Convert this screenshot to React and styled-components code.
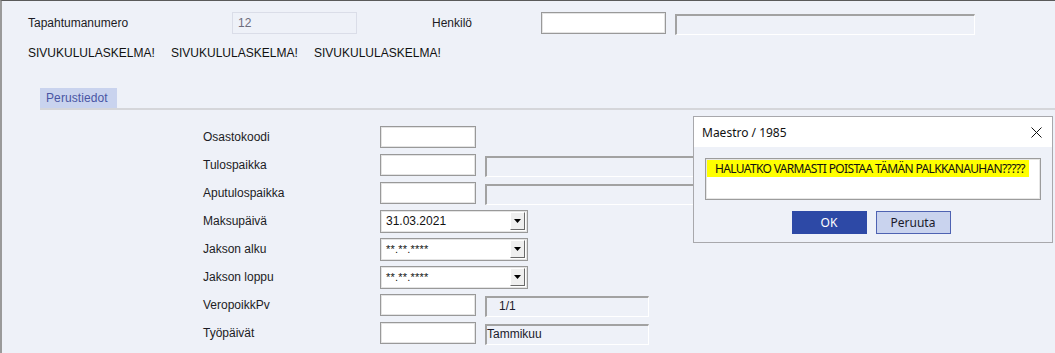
import React from 'react';
import styled, { createGlobalStyle } from 'styled-components';

const GlobalStyle = createGlobalStyle`
  html, body {
    margin: 0;
    padding: 0;
    background: #eef1f8;
  }
  body {
    font-family: "Liberation Sans", Arial, sans-serif;
    font-size: 12px;
    color: #1c1c24;
  }
`;

const Frame = styled.div`
  position: relative;
  width: 1053px;
  height: 352px;
  overflow: hidden;
  background: #eef1f8;
  border-top: 1px solid #5a5a5a;
  border-left: 2px solid #9a9a9a;
  display: flex;
  flex-direction: column;
`;

const TopRow = styled.div`
  display: flex;
  align-items: center;
  height: 22px;
  margin-top: 11px;
  padding-left: 26px;
`;

const Label = styled.span`
  flex: none;
  width: ${(p) => p.$w || 168}px;
  margin-left: ${(p) => p.$ml || 0}px;
  line-height: 14px;
  white-space: nowrap;
`;

const ReadField = styled.div`
  box-sizing: border-box;
  width: 125px;
  height: 22px;
  border: 1px solid #dadde8;
  padding: 0 0 0 5px;
  color: #6c6c7c;
  line-height: 20px;
`;

const Input = styled.div`
  box-sizing: border-box;
  flex: none;
  width: ${(p) => p.$w || 96}px;
  height: 22px;
  background: #fff;
  border: 1px solid #999;
  box-shadow: inset 0 0 0 1px #e4e4e4;
`;

const Sunken = styled.div`
  box-sizing: border-box;
  flex: none;
  width: ${(p) => p.$w}px;
  height: 21px;
  margin-top: ${(p) => p.$mt || 0}px;
  margin-left: ${(p) => p.$ml || 0}px;
  border-top: 2px solid #a2a2a2;
  border-left: 2px solid #a2a2a2;
  border-right: 1px solid #fff;
  border-bottom: 1px solid #fff;
  padding-left: ${(p) => p.$pl || 0}px;
  line-height: 17px;
  color: #1a1a2a;
`;

const WarnRow = styled.div`
  display: flex;
  margin-top: 12px;
  padding-left: 26px;
  line-height: 14px;
  height: 14px;
`;

const Warn = styled.span`
  width: 143px;
  flex: none;
  color: #111;
`;

const TabBar = styled.div`
  display: flex;
  margin-top: 28px;
  margin-left: 38px;
  border-bottom: 2px solid #d5d6da;
`;

const Tab = styled.div`
  width: 77px;
  height: 20px;
  box-sizing: border-box;
  background: #c9d3ee;
  color: #4a56a4;
  padding-left: 6px;
  line-height: 21px;
  letter-spacing: 0.1px;
`;

const Form = styled.div`
  display: flex;
  flex-direction: column;
  margin-top: 13px;
  padding-left: 201px;
`;

const Row = styled.div`
  display: flex;
  align-items: center;
  height: 28px;
  gap: 9px;
`;

const Select = styled.div`
  box-sizing: border-box;
  width: 148px;
  height: 23px;
  background: #fff;
  border: 1px solid #999;
  box-shadow: inset 0 0 0 1px #e4e4e4;
  display: flex;
  align-items: center;
  justify-content: space-between;
  padding: 0 2px 0 5px;
  color: #111;
`;

const Stars = styled.span`
  font-size: 11px;
  letter-spacing: 0.2px;
`;

const DropButton = styled.div`
  box-sizing: border-box;
  width: 15px;
  height: 18px;
  background: #efefef;
  border-top: 1px solid #fff;
  border-left: 1px solid #fff;
  border-right: 1px solid #6a6a6a;
  border-bottom: 1px solid #6a6a6a;
  display: flex;
  align-items: center;
  justify-content: center;
`;

const Dialog = styled.div`
  position: absolute;
  left: 691px;
  top: 115px;
  width: 360px;
  height: 127px;
  box-sizing: border-box;
  border: 1px solid #a8a8ac;
  background: #eef1f8;
  font-family: "Noto Sans", "Segoe UI", sans-serif;
  display: flex;
  flex-direction: column;
`;

const TitleBar = styled.div`
  height: 30px;
  background: #fff;
  display: flex;
  align-items: center;
  justify-content: space-between;
  padding: 0 10px 0 8px;
  font-size: 12px;
  color: #111;
`;

const DialogBody = styled.div`
  display: flex;
  flex-direction: column;
  padding: 11px 11px 0 11px;
`;

const MessageBox = styled.div`
  box-sizing: border-box;
  height: 42px;
  background: #fff;
  border: 1px solid #9c9c9c;
  box-shadow: inset 0 0 0 1px #e6e6e6;
  padding: 1px 0 0 1px;
  overflow: hidden;
  white-space: nowrap;
`;

const Highlight = styled.span`
  display: inline-block;
  background: #ffff00;
  font-size: 12px;
  letter-spacing: -0.65px;
  line-height: 17px;
  padding: 0 4px 0 8px;
  color: #111;
`;

const Buttons = styled.div`
  display: flex;
  justify-content: center;
  gap: 9px;
  margin-top: 11px;
  padding-right: 4px;
`;

const Button = styled.button`
  box-sizing: border-box;
  width: 75px;
  height: 23px;
  font-family: "Noto Sans", "Segoe UI", sans-serif;
  font-size: 12px;
  padding: 0;
  border: 1px solid ${(p) => (p.$primary ? '#2d49a6' : '#4e62b2')};
  background: ${(p) => (p.$primary ? '#2d49a6' : '#c9d3ee')};
  color: ${(p) => (p.$primary ? '#fff' : '#1a1a2a')};
`;

const rows = [
  { label: 'Osastokoodi', kind: 'input' },
  { label: 'Tulospaikka', kind: 'pair' },
  { label: 'Aputulospaikka', kind: 'pair' },
  { label: 'Maksupäivä', kind: 'select', value: '31.03.2021' },
  { label: 'Jakson alku', kind: 'select', value: '**.**.****', stars: true },
  { label: 'Jakson loppu', kind: 'select', value: '**.**.****', stars: true },
  { label: 'VeropoikkPv', kind: 'info', value: '1/1', pl: 12 },
  { label: 'Työpäivät', kind: 'info', value: 'Tammikuu', pl: 0 },
];

function Arrow() {
  return (
    <svg width="7" height="4" viewBox="0 0 7 4">
      <path d="M0 0h7L3.5 4z" fill="#000" />
    </svg>
  );
}

function CloseIcon() {
  return (
    <svg width="11" height="11" viewBox="0 0 11 11">
      <path d="M0.5 0.5L10.5 10.5M10.5 0.5L0.5 10.5" stroke="#111" strokeWidth="1" />
    </svg>
  );
}

function FormRow({ row }) {
  return (
    <Row>
      <Label>{row.label}</Label>
      {row.kind === 'select' ? (
        <Select>
          {row.stars ? <Stars>{row.value}</Stars> : <span>{row.value}</span>}
          <DropButton>
            <Arrow />
          </DropButton>
        </Select>
      ) : (
        <Input />
      )}
      {row.kind === 'pair' && <Sunken $w={300} $mt={2} />}
      {row.kind === 'info' && (
        <Sunken $w={164} $mt={2} $pl={row.pl}>
          {row.value}
        </Sunken>
      )}
    </Row>
  );
}

export default function App() {
  return (
    <>
      <GlobalStyle />
      <Frame>
        <TopRow>
          <Label $w={204}>Tapahtumanumero</Label>
          <ReadField>12</ReadField>
          <Label $w={109} $ml={75}>Henkilö</Label>
          <Input $w={125} />
          <Sunken $w={300} $mt={2} $ml={9} />
        </TopRow>

        <WarnRow>
          <Warn>SIVUKULULASKELMA!</Warn>
          <Warn>SIVUKULULASKELMA!</Warn>
          <Warn>SIVUKULULASKELMA!</Warn>
        </WarnRow>

        <TabBar>
          <Tab>Perustiedot</Tab>
        </TabBar>

        <Form>
          {rows.map((row) => (
            <FormRow key={row.label} row={row} />
          ))}
        </Form>

        <Dialog>
          <TitleBar>
            <span>Maestro / 1985</span>
            <CloseIcon />
          </TitleBar>
          <DialogBody>
            <MessageBox>
              <Highlight>HALUATKO VARMASTI POISTAA TÄMÄN PALKKANAUHAN?????</Highlight>
            </MessageBox>
            <Buttons>
              <Button $primary>OK</Button>
              <Button>Peruuta</Button>
            </Buttons>
          </DialogBody>
        </Dialog>
      </Frame>
    </>
  );
}
